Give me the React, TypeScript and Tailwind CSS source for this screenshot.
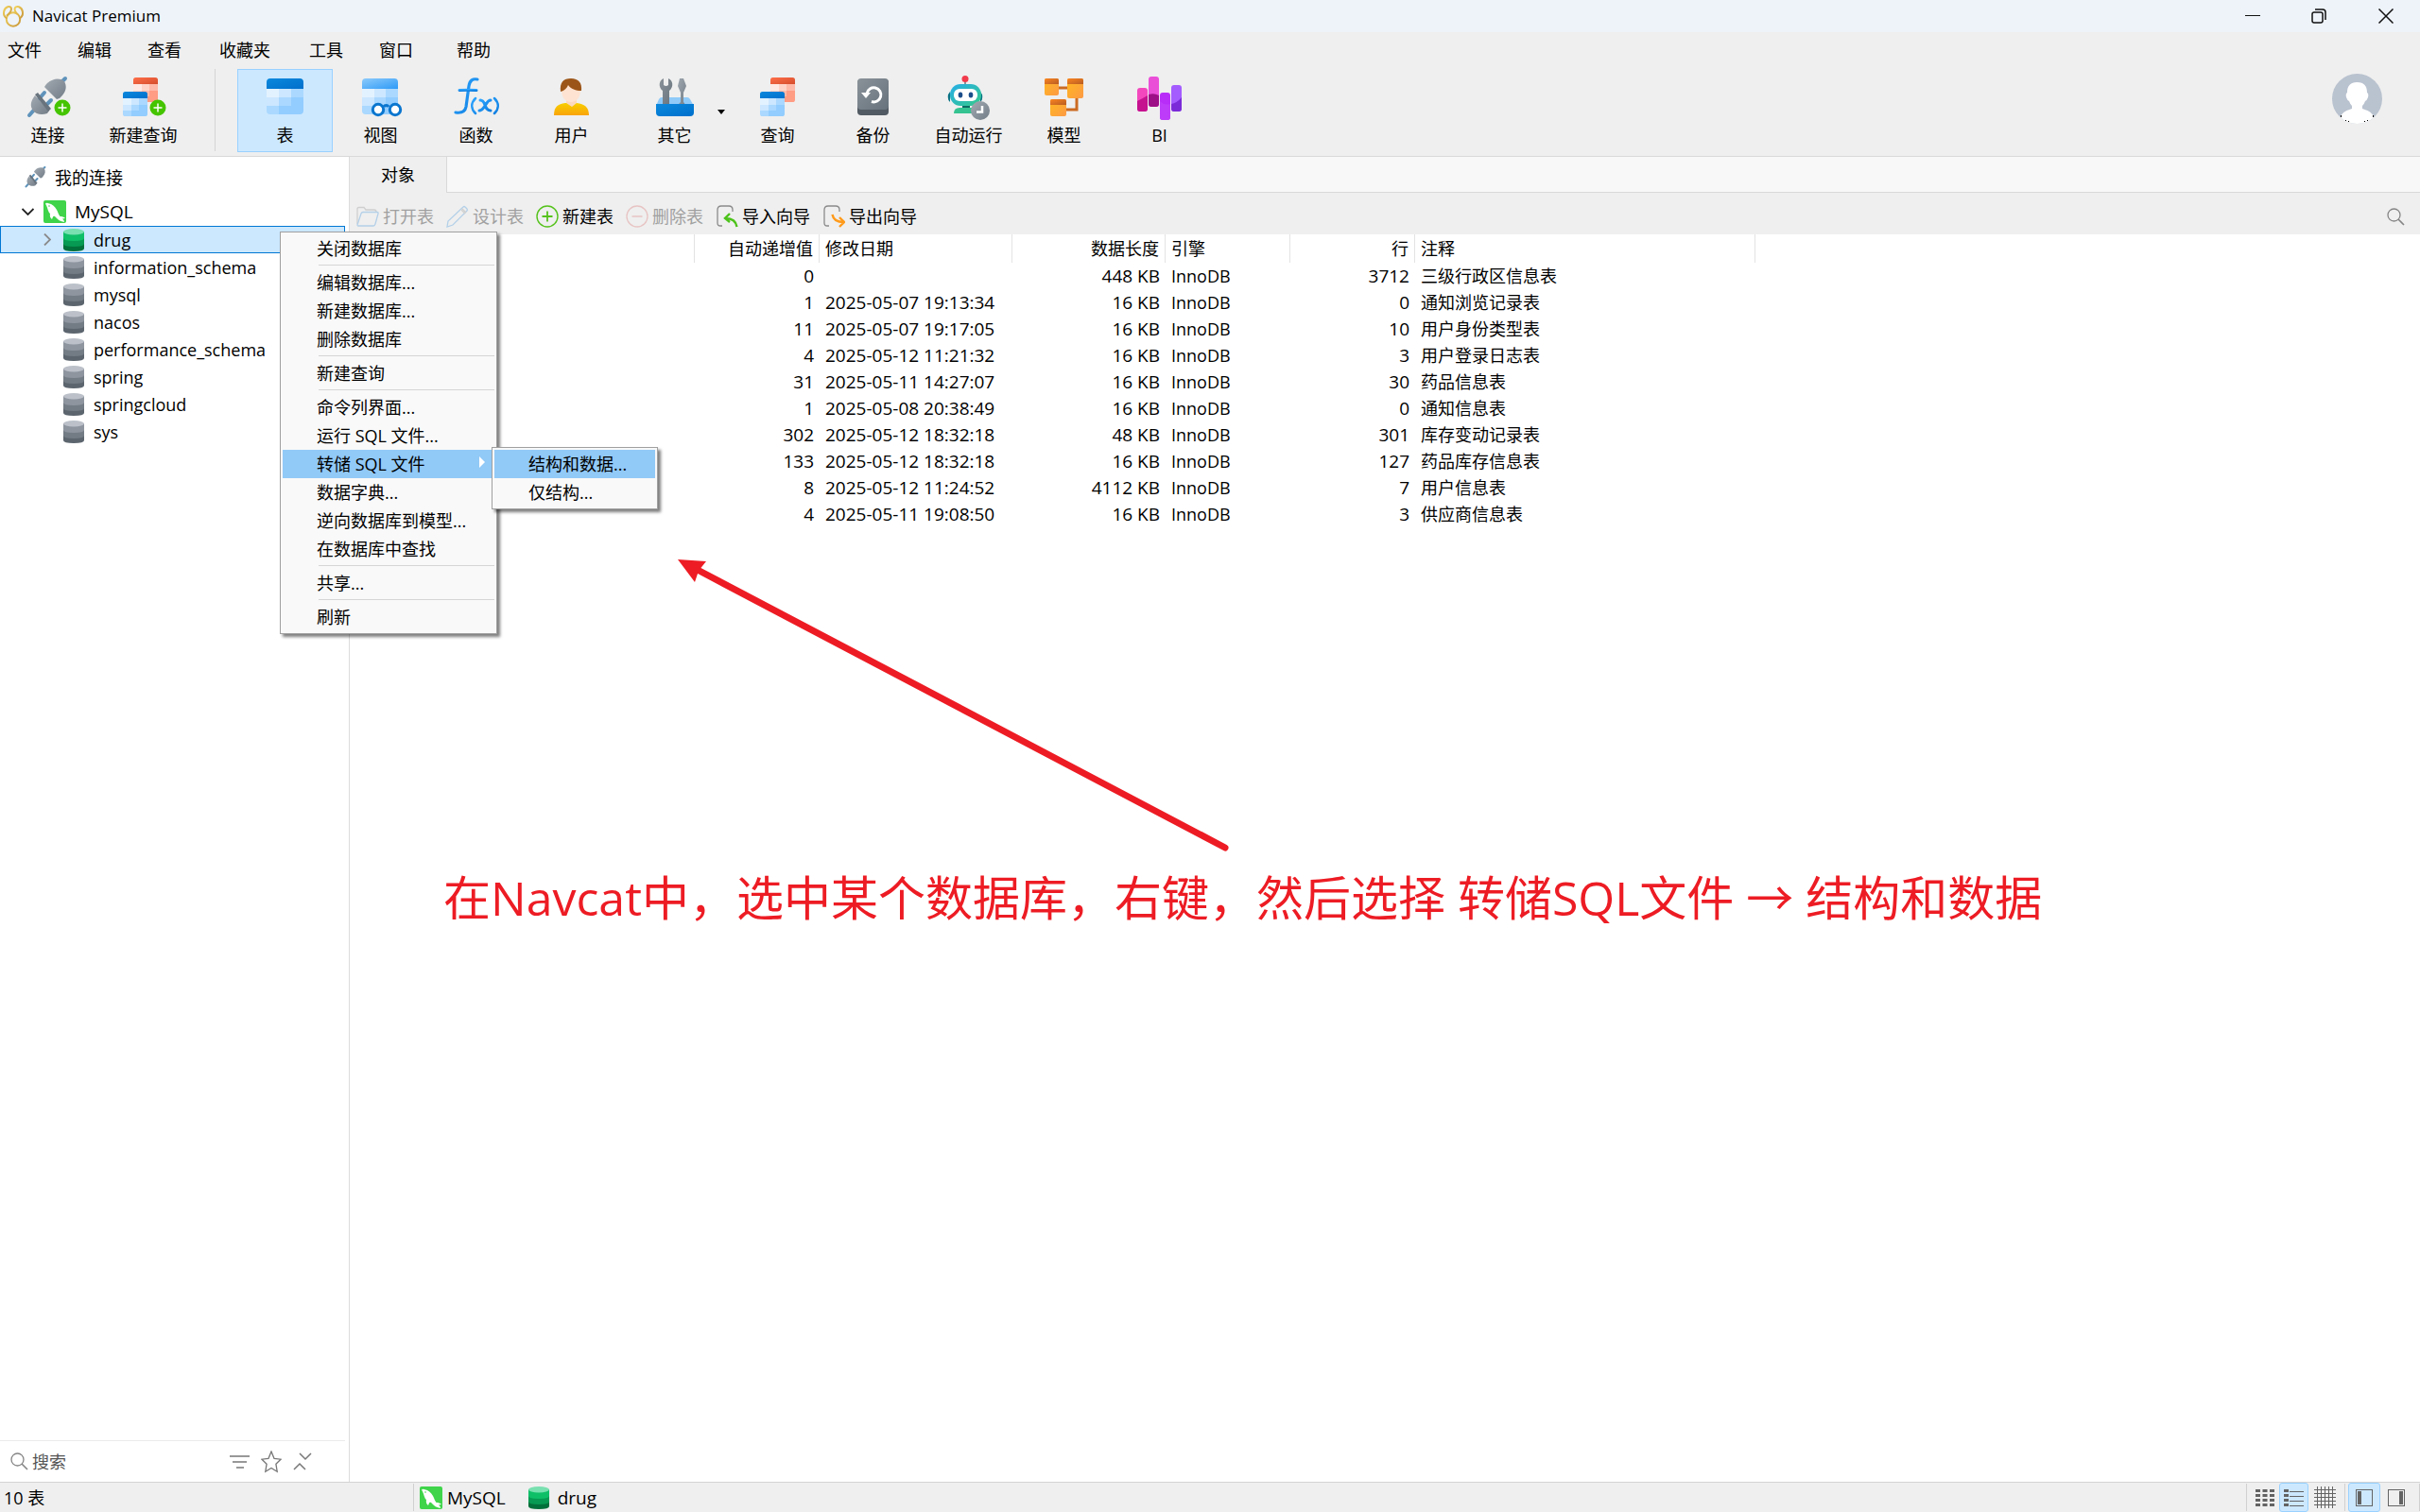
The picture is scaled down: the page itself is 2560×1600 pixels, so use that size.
import type { ReactNode } from 'react';

const DATABASES = [
  'information_schema',
  'mysql',
  'nacos',
  'performance_schema',
  'spring',
  'springcloud',
  'sys',
];

const ROWS = [
  ['0', '', '448 KB', 'InnoDB', '3712', '三级行政区信息表'],
  ['1', '2025-05-07 19:13:34', '16 KB', 'InnoDB', '0', '通知浏览记录表'],
  ['11', '2025-05-07 19:17:05', '16 KB', 'InnoDB', '10', '用户身份类型表'],
  ['4', '2025-05-12 11:21:32', '16 KB', 'InnoDB', '3', '用户登录日志表'],
  ['31', '2025-05-11 14:27:07', '16 KB', 'InnoDB', '30', '药品信息表'],
  ['1', '2025-05-08 20:38:49', '16 KB', 'InnoDB', '0', '通知信息表'],
  ['302', '2025-05-12 18:32:18', '48 KB', 'InnoDB', '301', '库存变动记录表'],
  ['133', '2025-05-12 18:32:18', '16 KB', 'InnoDB', '127', '药品库存信息表'],
  ['8', '2025-05-12 11:24:52', '4112 KB', 'InnoDB', '7', '用户信息表'],
  ['4', '2025-05-11 19:08:50', '16 KB', 'InnoDB', '3', '供应商信息表'],
];

const MENUS = [
  { label: '文件', width: 'w-[74px]' },
  { label: '编辑', width: 'w-[74px]' },
  { label: '查看', width: 'w-[76px]' },
  { label: '收藏夹', width: 'w-[95px]' },
  { label: '工具', width: 'w-[74px]' },
  { label: '窗口', width: 'w-[82px]' },
  { label: '帮助', width: 'w-[74px]' },
];

/* ---------- toolbar drawings ---------- */

function Gradients() {
  return (
    <svg className="absolute size-0" aria-hidden="true">
      <defs>
        <linearGradient id="gBlue" x1="0" y1="0" x2="1" y2="1">
          <stop offset="0" stopColor="#0b88dd" />
          <stop offset="1" stopColor="#0070cc" />
        </linearGradient>
        <linearGradient id="gSky" x1="0" y1="0" x2="1" y2="1">
          <stop offset="0" stopColor="#8ccafb" />
          <stop offset="1" stopColor="#2f9bf7" />
        </linearGradient>
        <linearGradient id="gRed" x1="0" y1="0" x2="1" y2="1">
          <stop offset="0" stopColor="#ff6e48" />
          <stop offset="1" stopColor="#d44d2d" />
        </linearGradient>
        <linearGradient id="gGray" x1="0" y1="0" x2="1" y2="1">
          <stop offset="0" stopColor="#a2a9b1" />
          <stop offset="1" stopColor="#727d87" />
        </linearGradient>
        <linearGradient id="gSlate" x1="0" y1="0" x2="1" y2="1">
          <stop offset="0" stopColor="#8a9299" />
          <stop offset="1" stopColor="#66727c" />
        </linearGradient>
        <linearGradient id="gBot" x1="0" y1="0" x2="1" y2="1">
          <stop offset="0" stopColor="#27aee8" />
          <stop offset="1" stopColor="#35c98a" />
        </linearGradient>
        <linearGradient id="gGold" x1="0" y1="0" x2="0" y2="1">
          <stop offset="0" stopColor="#f8cf00" />
          <stop offset="1" stopColor="#f9a30a" />
        </linearGradient>
        <linearGradient id="gAmber" x1="0" y1="0" x2="1" y2="1">
          <stop offset="0" stopColor="#ffb81f" />
          <stop offset="1" stopColor="#fd9a45" />
        </linearGradient>
        <linearGradient id="gRust" x1="0" y1="0" x2="1" y2="1">
          <stop offset="0" stopColor="#fb8521" />
          <stop offset="1" stopColor="#b85c22" />
        </linearGradient>
        <linearGradient id="gFx" x1="0" y1="0" x2="1" y2="1">
          <stop offset="0" stopColor="#2ea4ff" />
          <stop offset="1" stopColor="#0f7fe0" />
        </linearGradient>
        <linearGradient id="gNavicat" x1="0" y1="0" x2="1" y2="1">
          <stop offset="0" stopColor="#f2d35c" />
          <stop offset="1" stopColor="#c9973a" />
        </linearGradient>
      </defs>
    </svg>
  );
}

function GridCard({
  x,
  y,
  w,
  h,
  head,
  tones,
}: {
  x: number;
  y: number;
  w: number;
  h: number;
  head: string;
  tones: [string, string, string, string];
}) {
  const top = h * 0.28;
  const ch = (h - top) / 3;
  const cw = w / 3;
  const pattern = [
    [0, 1, 2],
    [1, 2, 3],
    [2, 3, 3],
  ];
  const id = `card${x}-${y}-${w}`;
  return (
    <g>
      <clipPath id={id}>
        <rect x={x} y={y} width={w} height={h} rx={w * 0.1} />
      </clipPath>
      <g clipPath={`url(#${id})`} shapeRendering="crispEdges">
        {pattern.map((row, r) =>
          row.map((tone, c) => (
            <rect
              key={`${r}${c}`}
              x={x + c * cw}
              y={y + top + r * ch}
              width={cw + 0.5}
              height={ch + 0.5}
              fill={tones[tone]}
            />
          )),
        )}
        <rect x={x} y={y} width={w} height={top} fill={head} />
      </g>
    </g>
  );
}

const BLUES: [string, string, string, string] = ['#e3f2ff', '#cce7ff', '#aad8ff', '#93cdff'];
const REDS: [string, string, string, string] = ['#ffe9e4', '#ffd3c8', '#ffb9a8', '#ff9c84'];

function Plug() {
  return (
    <g>
      <path d="M37 6 41 2M3 41l7-8" stroke="#5f93bb" strokeWidth="4" strokeLinecap="round" />
      <path d="M19 17l-6 7M26 25l-6 6" stroke="#5f93bb" strokeWidth="4" strokeLinecap="round" />
      <path d="M19 11 32 24q3 0 5-3c5-5 6-11 3-16C35 1 28 2 22 7q-2 2-3 4Z" fill="url(#gGray)" />
      <path d="M9 20 24 36l-2 3c-6 2-12 1-15-3-4-5-2-11 2-16Z" fill="url(#gGray)" />
      <path d="m9 19 3-2 14 17-3 3Z" fill="#68737d" />
    </g>
  );
}

function PlusBadge({ cx, cy }: { cx: number; cy: number }) {
  return (
    <g>
      <circle cx={cx} cy={cy} r="8.5" fill="#45c400" />
      <path d={`M${cx - 4.5} ${cy}h9M${cx} ${cy - 4.5}v9`} stroke="#fff" strokeWidth="1.5" />
    </g>
  );
}

function Drawing({ children }: { children: ReactNode }) {
  return (
    <svg width="48" height="48" viewBox="0 0 48 48" fill="none" aria-hidden="true">
      {children}
    </svg>
  );
}

const ConnectIcon = () => (
  <Drawing>
    <g transform="translate(1 2)">
      <Plug />
    </g>
    <PlusBadge cx={39} cy={35} />
  </Drawing>
);

const QueryCards = () => (
  <g>
    <GridCard x={13} y={3} w={26} h={26} head="url(#gRed)" tones={REDS} />
    <GridCard x={2} y={18} w={26} h={26} head="url(#gBlue)" tones={BLUES} />
  </g>
);

const NewQueryIcon = () => (
  <Drawing>
    <QueryCards />
    <PlusBadge cx={39} cy={35} />
  </Drawing>
);

const TableIcon = () => (
  <Drawing>
    <GridCard x={4} y={4} w={39} h={38} head="url(#gBlue)" tones={BLUES} />
  </Drawing>
);

const ViewIcon = () => (
  <Drawing>
    <GridCard x={4} y={4} w={38} h={38} head="url(#gSky)" tones={BLUES} />
    <g stroke="#0a76cf" strokeWidth="3" fill="#fff">
      <path d="M27 34c1-2 4-2 5 0" fill="none" />
      <circle cx="21" cy="37" r="5.7" />
      <circle cx="39" cy="37" r="5.7" />
    </g>
  </Drawing>
);

const FunctionIcon = () => (
  <Drawing>
    <g stroke="url(#gFx)" strokeLinecap="round">
      <path d="M25 5c-5-1-8 1-9 7l-3 22c-1 5-4 7-11 6" strokeWidth="3.2" />
      <path d="M6 16.500c6-.5 12-.5 18 .1" strokeWidth="3" />
      <path d="M23 25c-5 5-5 11 0 16M43 25c5 5 5 11 0 16" strokeWidth="2.500" />
      <path d="M28 27c3 0 4 2 5 5s2 6 6 6M39 27c-3 0-4 3-6 6s-3 5-6 5" strokeWidth="3" />
    </g>
  </Drawing>
);

const UserIcon = () => (
  <Drawing>
    <path d="M5 43c0-9 4-12 12-13h12c8 1 13 4 13 13Z" fill="url(#gGold)" />
    <path d="M18 25h11v5l-5 4-6-4Z" fill="#fbd9bf" />
    <path d="M13 16c0 8 4 13 10 13s10-5 10-13l-3-6-14-1Z" fill="#ffe3d2" />
    <path d="M12 18C11 8 15 4 23 4s12 5 11 13c-6 0-11-2-14-6-1 3-4 6-8 7Z" fill="#9c5518" />
  </Drawing>
);

const OtherIcon = () => (
  <Drawing>
    <path d="M7 26q1-2 3-2h27q2 0 3 2l4 7H4Z" fill="#8fcaf9" />
    <path
      d="M12 4c-5 2-6 9-1 13v17h7V17c5-4 4-11-1-13v7q-2.500 2-5 0Z"
      fill="url(#gSlate)"
    />
    <path d="M29 4h4l3 8-3 7v10l3 4H26l4-4V19l-3-7Z" fill="url(#gGray)" />
    <path d="M4 31h40v9q0 4-4 4H8q-4 0-4-4Z" fill="url(#gBlue)" />
  </Drawing>
);

const QueryIcon = () => (
  <Drawing>
    <g transform="translate(3 0)">
      <QueryCards />
    </g>
  </Drawing>
);

const BackupIcon = () => (
  <Drawing>
    <rect x="7" y="5" width="33" height="38" rx="4" fill="#525b63" />
    <rect x="7" y="4" width="33" height="33" rx="4" fill="url(#gSlate)" />
    <path d="M17 20a7.500 7.500 0 1 1 5 8.500" stroke="#fff" strokeWidth="3" />
    <path d="M11 19h10l-5 6Z" fill="#fff" />
  </Drawing>
);

const AutomationIcon = () => (
  <Drawing>
    <path d="M20 5v6" stroke="#8a9299" strokeWidth="2" />
    <circle cx="20" cy="4.500" r="3.500" fill="#f13a4b" />
    <path d="M2 21q-1 6 2 8V18ZM38 21q1 6-2 8V18Z" fill="#0a7284" />
    <rect x="4" y="10" width="33" height="23" rx="11" fill="url(#gBot)" />
    <rect x="8" y="15" width="25" height="13" rx="6" fill="#fff" />
    <ellipse cx="15" cy="21.500" rx="2.300" ry="3" fill="#1c4e8a" />
    <ellipse cx="26" cy="21.500" rx="2.300" ry="3" fill="#1c4e8a" />
    <path d="M17 33h8v3h-8Z" fill="#0b6b62" />
    <path d="M8 41q0-6 6-6h16v6Z" fill="#35c391" />
    <circle cx="36" cy="38" r="10" fill="url(#gGray)" />
    <path d="M38 33v6.500h-6" stroke="#fff" strokeWidth="2.500" />
  </Drawing>
);

const ModelIcon = () => (
  <Drawing>
    <path d="M16 14h14M37 22v15H22" stroke="#cc6b22" strokeWidth="3" />
    <rect x="3" y="4" width="15" height="18" rx="2" fill="url(#gAmber)" />
    <path d="M3 10V6q0-2 2-2h11q2 0 2 2v4Z" fill="url(#gRust)" />
    <rect x="27" y="4" width="17" height="21" rx="2" fill="url(#gAmber)" />
    <path d="M27 10V6q0-2 2-2h13q2 0 2 2v4Z" fill="url(#gRust)" />
    <rect x="9" y="26" width="17" height="18" rx="2" fill="url(#gAmber)" />
    <path d="M9 32v-4q0-2 2-2h13q2 0 2 2v4Z" fill="url(#gRust)" />
  </Drawing>
);

const BiIcon = () => (
  <Drawing>
    <rect x="0" y="14" width="11" height="25" rx="3" fill="#f348bd" />
    <path d="M0 28q6-3 11-6v14q0 3-3 3H3q-3 0-3-3Z" fill="#c5128f" />
    <rect x="12" y="2" width="11" height="32" rx="3" fill="#ea4fd8" />
    <path d="M12 21q6-2 11 1v9q0 3-3 3h-5q-3 0-3-3Z" fill="#9d0f86" />
    <rect x="24" y="19" width="11" height="29" rx="3" fill="#b82ef8" />
    <path d="M24 28q5 5 11 3v14q0 3-3 3h-5q-3 0-3-3Z" fill="#bd3cf9" />
    <rect x="36" y="11" width="11" height="28" rx="3" fill="#a45cff" />
    <path d="M36 31q6-1 11-7v12q0 3-3 3h-5q-3 0-3-3Z" fill="#7b2bd8" />
  </Drawing>
);

/* ---------- small icons ---------- */

function NavicatLogo() {
  return (
    <svg width="24" height="24" viewBox="0 0 24 24" fill="none" aria-hidden="true">
      <g stroke="url(#gNavicat)" strokeWidth="2" strokeLinecap="round">
        <circle cx="12" cy="15.500" r="7.200" />
        <path d="M4.500 14C.5 11 1.500 4 6 2.200c2.500-.8 4 .6 4 2.500 0 3-1.500 3.800-4.500 6.500" />
        <path d="M19.500 14c4-3 3-10-1.500-11.800-2.500-.8-4.500.6-4.500 2.500 0 2 .8 3 2 4.500" />
      </g>
    </svg>
  );
}

function DatabaseIcon({ active = false }: { active?: boolean }) {
  const c = active
    ? ['#79e0b0', '#0fbf68', '#069a52', '#02703a']
    : ['#bcc1c9', '#8f959f', '#737b84', '#5c656e'];
  return (
    <svg width="22" height="24" viewBox="0 0 22 24" className="shrink-0" aria-hidden="true">
      <path d="M0 15h22v6q0 3-11 3T0 21Z" fill={c[3]} />
      <path d="M0 9h22v7q0 3-11 3T0 16Z" fill={c[2]} />
      <path d="M0 3h22v7q0 3-11 3T0 10Z" fill={c[1]} />
      <ellipse cx="11" cy="3.200" rx="11" ry="3.200" fill={c[0]} />
    </svg>
  );
}

function MySqlIcon() {
  return (
    <svg width="24" height="24" viewBox="0 0 24 24" className="shrink-0" aria-hidden="true">
      <rect width="24" height="24" rx="2" fill="#3fd44a" />
      <path
        d="M2 3.500Q3.500 2 5.500 3.200C9 4 12 6 14 10c1.500 3 2 5 3.500 7 2 0 4 .5 5.500 2l-3 .5c1 1 2 2 2 3.500-4-.5-7-2.500-10-6-1-.5-1.800-.3-2 .5L9 20c-2-1.500-2.500-3.500-2-6C4.500 12 5 8.500 2 3.500Z"
        fill="#fff"
      />
      <circle cx="6" cy="6" r=".8" fill="#3fd44a" />
    </svg>
  );
}

function SearchIcon({ size }: { size: number }) {
  return (
    <svg width={size} height={size} viewBox="0 0 19 19" fill="none" stroke="#858585" aria-hidden="true">
      <circle cx="7.500" cy="7.500" r="6.500" strokeWidth="1.300" />
      <path d="m12 12 6 6" strokeWidth="1.600" />
    </svg>
  );
}

const FolderIcon = () => (
  <svg width="24" height="24" viewBox="0 0 24 24" fill="none" strokeWidth="1.300" aria-hidden="true">
    <path d="M1 20V4q0-1.500 1.500-1.500H8l2 2.500h9q2 0 2 2.500" stroke="#cfcfcf" />
    <path d="m1 21 4-12q.5-1.500 2-1.500h15q1.500 0 1 1.500l-3 11q-.5 2-2 2H2q-1 0-1-1Z" stroke="#b4d0e8" />
  </svg>
);

const PencilIcon = () => (
  <svg width="24" height="24" viewBox="0 0 24 24" fill="none" strokeWidth="1.300" aria-hidden="true">
    <path d="m2 17-1 6 6-2L22 6q1-1 0-2l-2-2q-1-1-2 0Z" stroke="#b4d0e8" />
    <path d="m16 5 4 4" stroke="#cfcfcf" />
    <path d="m17 4 4 4" stroke="#cfcfcf" />
  </svg>
);

const AddIcon = () => (
  <svg width="24" height="24" viewBox="0 0 24 24" fill="none" stroke="#55c21c" aria-hidden="true">
    <circle cx="12" cy="12" r="11" strokeWidth="1.400" />
    <path d="M6.500 12h11M12 6.500v11" strokeWidth="1.800" />
  </svg>
);

const RemoveIcon = () => (
  <svg width="24" height="24" viewBox="0 0 24 24" fill="none" stroke="#e8c4c4" aria-hidden="true">
    <circle cx="12" cy="12" r="11" strokeWidth="1.300" />
    <path d="M6.500 12h11" strokeWidth="1.500" />
  </svg>
);

const ImportIcon = () => (
  <svg width="24" height="24" viewBox="0 0 24 24" fill="none" aria-hidden="true">
    <path d="M7 22H5q-3 0-3-3V5q0-4 4-4h8q4 0 4 4v2" stroke="#8a8a8a" strokeWidth="1.300" />
    <path d="M15 9 10 14l5 4M10.500 14c7 0 11 3 12 9" stroke="#4cc21a" strokeWidth="2.400" />
  </svg>
);

const ExportIcon = () => (
  <svg width="24" height="24" viewBox="0 0 24 24" fill="none" aria-hidden="true">
    <path d="M7 22H5q-3 0-3-3V5q0-4 4-4h8q4 0 4 4v2" stroke="#8a8a8a" strokeWidth="1.300" />
    <path d="m18 13 5 5-5 5M22.500 18c-7 0-11-2-12-8" stroke="#ff9a1a" strokeWidth="2.400" />
  </svg>
);

/* ---------- shared parts ---------- */

function ToolButton({
  icon,
  label,
  active = false,
  wide = false,
}: {
  icon: ReactNode;
  label: string;
  active?: boolean;
  wide?: boolean;
}) {
  return (
    <button
      type="button"
      aria-pressed={active}
      className={`relative flex h-[88px] shrink-0 flex-col items-center border pt-[5px] ${
        wide ? 'w-[117px]' : 'w-[101px]'
      } ${active ? 'border-[#99d1ff] bg-[#cce8ff]' : 'border-transparent'}`}
    >
      {icon}
      <span className="mt-[2px] leading-[28px]">{label}</span>
      {wide && (
        <svg
          width="8"
          height="5"
          viewBox="0 0 8 5"
          className="absolute top-[42px] right-1"
          aria-hidden="true"
        >
          <path d="M0 0h8L4 5Z" fill="#000" />
        </svg>
      )}
    </button>
  );
}

function ObjectAction({
  icon,
  label,
  disabled = false,
}: {
  icon: ReactNode;
  label: string;
  disabled?: boolean;
}) {
  return (
    <button type="button" disabled={disabled} className="flex items-center gap-1 disabled:text-[#a0a0a0]">
      {icon}
      {label}
    </button>
  );
}

function MenuItem({
  label,
  active = false,
  children,
}: {
  label: string;
  active?: boolean;
  children?: ReactNode;
}) {
  return (
    <li role="none" className="relative">
      <button
        type="button"
        role="menuitem"
        className={`flex h-[30px] w-full items-center justify-between pr-[9px] pl-9 text-left whitespace-nowrap ${
          active ? 'bg-[#91c9f7]' : ''
        }`}
      >
        {label}
        {children && (
          <svg width="6" height="12" viewBox="0 0 6 12" className="mr-px mb-1" aria-hidden="true">
            <path d="M0 0v12l6-6Z" fill="#fff" />
          </svg>
        )}
      </button>
      {children}
    </li>
  );
}

const MenuDivider = () => (
  <li role="separator" className="flex h-[6px] items-start pt-[2px] pl-[38px]">
    <span className="h-px w-full bg-[#d5d5d5]" />
  </li>
);

const MENU_BOX =
  'absolute z-20 border border-[#a0a0a0] bg-[#f9f9f9] p-[2px] shadow-[3px_3px_3px_rgba(0,0,0,0.5)]';

function ContextMenu() {
  return (
    <ul role="menu" aria-label="数据库" className={`${MENU_BOX} top-[5px] left-[295px] w-[230px]`}>
      <MenuItem label="关闭数据库" />
      <MenuDivider />
      <MenuItem label="编辑数据库..." />
      <MenuItem label="新建数据库..." />
      <MenuItem label="删除数据库" />
      <MenuDivider />
      <MenuItem label="新建查询" />
      <MenuDivider />
      <MenuItem label="命令列界面..." />
      <MenuItem label="运行 SQL 文件..." />
      <MenuItem label="转储 SQL 文件" active>
        <ul role="menu" aria-label="转储 SQL 文件" className={`${MENU_BOX} -top-[3px] left-[221px] w-[176px]`}>
          <MenuItem label="结构和数据..." active />
          <MenuItem label="仅结构..." />
        </ul>
      </MenuItem>
      <MenuItem label="数据字典..." />
      <MenuItem label="逆向数据库到模型..." />
      <MenuItem label="在数据库中查找" />
      <MenuDivider />
      <MenuItem label="共享..." />
      <MenuDivider />
      <MenuItem label="刷新" />
    </ul>
  );
}

/* ---------- page sections ---------- */

function TitleBar() {
  return (
    <header className="flex h-[34px] shrink-0 items-center bg-[#eef3fa] pl-[2px]">
      <NavicatLogo />
      <h1 className="ml-2 flex-1 text-[17px]">Navicat Premium</h1>
      <div className="flex h-full">
        <button type="button" aria-label="最小化" className="flex w-[70px] items-center justify-center">
          <svg width="16" height="16" viewBox="0 0 16 16" stroke="#111" aria-hidden="true">
            <path d="M0 7.500h16" />
          </svg>
        </button>
        <button type="button" aria-label="还原" className="flex w-[70px] items-center justify-center">
          <svg width="16" height="16" viewBox="0 0 16 16" fill="none" stroke="#111" strokeWidth="1.500" aria-hidden="true">
            <rect x="1" y="4" width="11" height="11" rx="2" />
            <path d="M4 1h8q3 0 3 3v8" />
          </svg>
        </button>
        <button type="button" aria-label="关闭" className="flex w-[72px] items-center justify-center">
          <svg width="16" height="16" viewBox="0 0 16 16" stroke="#111" strokeWidth="1.500" aria-hidden="true">
            <path d="m.5.5 15 15m0-15-15 15" />
          </svg>
        </button>
      </div>
    </header>
  );
}

function Toolbar() {
  return (
    <div className="flex h-[94px] shrink-0 items-start border-b border-[#d9d9d9] pt-px">
      <ToolButton icon={<ConnectIcon />} label="连接" />
      <ToolButton icon={<NewQueryIcon />} label="新建查询" />
      <span className="mr-[23px] ml-[25px] h-[87px] w-px bg-[#d4d4d4]" />
      <ToolButton icon={<TableIcon />} label="表" active />
      <ToolButton icon={<ViewIcon />} label="视图" />
      <ToolButton icon={<FunctionIcon />} label="函数" />
      <ToolButton icon={<UserIcon />} label="用户" />
      <ToolButton icon={<OtherIcon />} label="其它" wide />
      <ToolButton icon={<QueryIcon />} label="查询" />
      <ToolButton icon={<BackupIcon />} label="备份" />
      <ToolButton icon={<AutomationIcon />} label="自动运行" />
      <ToolButton icon={<ModelIcon />} label="模型" />
      <ToolButton icon={<BiIcon />} label="BI" />
      <button type="button" aria-label="用户帐户" className="mt-[5px] mr-10 ml-auto">
        <svg width="53" height="53" viewBox="0 0 53 53" aria-hidden="true">
          <clipPath id="avatar">
            <circle cx="26.500" cy="26.500" r="26.500" />
          </clipPath>
          <g clipPath="url(#avatar)">
            <rect width="53" height="53" fill="#b9c2cf" />
            <path
              d="M26.500 9C19 9 16 13 16 20q-2 1-1 5 1 3 3 4 1 3 3 5v3C15 39 12 40 9 45v8h35v-8c-3-5-6-6-12-8v-3q2-2 3-5 2-1 3-4 1-4-1-5c0-7-3-11-10.500-11Z"
              fill="#fff"
            />
            <path
              d="M9 44h1v2H9ZM43 44h1v2h-1ZM14 49h1v1h-1ZM17 50h1v1h-1ZM34 50h1v1h-1ZM37 49h1v1h-1Z"
              fill="#000"
            />
          </g>
        </svg>
      </button>
    </div>
  );
}

function Sidebar() {
  return (
    <aside className="flex w-[370px] shrink-0 flex-col border-r border-[#dcdcdc] bg-white">
      <ul role="tree" aria-label="我的连接" className="flex-1 pt-[7px]">
        <li role="treeitem" className="mb-[7px] flex h-[29px] items-center gap-2 pl-[26px]">
          <svg width="24" height="24" viewBox="0 0 46 46" fill="none" aria-hidden="true">
            <Plug />
          </svg>
          我的连接
        </li>
        <li role="treeitem" aria-expanded="true" className="mb-px flex h-[29px] items-center pl-[23px]">
          <svg width="13" height="8" viewBox="0 0 13 8" fill="none" stroke="#222" strokeWidth="1.800" aria-hidden="true">
            <path d="m.5 1 6 6 6-6" />
          </svg>
          <span className="ml-[10px] flex items-center gap-[9px] text-[19px]">
            <MySqlIcon />
            MySQL
          </span>
        </li>
        <li
          role="treeitem"
          aria-selected="true"
          className="relative mr-1 flex h-[29px] items-center border border-[#0078d4] bg-[#cce8ff] pl-[45px]"
        >
          <svg width="8" height="13" viewBox="0 0 8 13" fill="none" stroke="#8a8a8a" strokeWidth="1.800" aria-hidden="true">
            <path d="m1 .5 6 6-6 6" />
          </svg>
          <span className="ml-[13px] flex items-center gap-[10px]">
            <DatabaseIcon active />
            drug
          </span>
          <ContextMenu />
        </li>
        {DATABASES.map((name) => (
          <li key={name} role="treeitem" className="flex h-[29px] items-center gap-[10px] pl-[67px]">
            <DatabaseIcon />
            {name}
          </li>
        ))}
      </ul>
      <div className="mr-1 flex h-[44px] items-center border-t border-[#ebebeb] pl-[11px]">
        <label htmlFor="tree-search" aria-label="搜索">
          <SearchIcon size={19} />
        </label>
        <input
          id="tree-search"
          type="text"
          placeholder="搜索"
          className="ml-1 w-0 flex-1 bg-transparent outline-none placeholder:text-[#555]"
        />
        <div className="mr-[35px] flex items-center gap-3">
          <button type="button" aria-label="筛选">
            <svg width="21" height="14" viewBox="0 0 21 14" stroke="#777" strokeWidth="1.300" aria-hidden="true">
              <path d="M0 1h21M3 7h15M7 13h8" />
            </svg>
          </button>
          <button type="button" aria-label="收藏">
            <svg width="22" height="24" viewBox="0 0 22 24" fill="none" stroke="#777" strokeWidth="1.300" aria-hidden="true">
              <path d="m11 1 3 7.300 7 .9-5.100 5 1.300 8L11 18.500l-6.200 3.700 1.300-8L1 9.200l7-.9Z" />
            </svg>
          </button>
          <button type="button" aria-label="全部折叠">
            <svg width="20" height="19" viewBox="0 0 20 19" fill="none" stroke="#777" strokeWidth="1.500" aria-hidden="true">
              <path d="m7 1 6 6 6-6M1 18l6-6 6 6" />
            </svg>
          </button>
        </div>
      </div>
    </aside>
  );
}

const HEAD = 'h-[30px] border-r border-[#e3e3e3] px-[6px] font-normal';

function ObjectTable() {
  return (
    <table className="w-max table-fixed border-separate border-spacing-0">
      <colgroup>
        <col className="w-[365px]" />
        <col className="w-[132px]" />
        <col className="w-[204px]" />
        <col className="w-[162px]" />
        <col className="w-[132px]" />
        <col className="w-[132px]" />
        <col className="w-[360px]" />
      </colgroup>
      <thead>
        <tr>
          <td className={HEAD} />
          <th scope="col" className={`${HEAD} text-right`}>自动递增值</th>
          <th scope="col" className={`${HEAD} text-left`}>修改日期</th>
          <th scope="col" className={`${HEAD} text-right`}>数据长度</th>
          <th scope="col" className={`${HEAD} text-left`}>引擎</th>
          <th scope="col" className={`${HEAD} text-right`}>行</th>
          <th scope="col" className={`${HEAD} text-left`}>注释</th>
        </tr>
      </thead>
      <tbody>
        {ROWS.map(([auto, modified, size, engine, count, comment]) => (
          <tr key={comment} className="h-7 text-[19px]">
            <td />
            <td className="px-[6px] text-right">{auto}</td>
            <td className="px-[6px]">{modified}</td>
            <td className="px-[6px] text-right">{size}</td>
            <td className="px-[6px] text-[18px]">{engine}</td>
            <td className="px-[6px] text-right">{count}</td>
            <td className="px-[6px] text-[18px]">{comment}</td>
          </tr>
        ))}
      </tbody>
    </table>
  );
}

function Annotation() {
  return (
    <>
      <svg
        width="590"
        height="315"
        viewBox="0 0 590 315"
        className="absolute top-[343px] left-[346px]"
        aria-hidden="true"
      >
        <path d="M20 11 580 306" stroke="#ed1c24" strokeWidth="7" strokeLinecap="round" />
        <path d="m1 1 30 2-8 10-4 12Z" fill="#ed1c24" />
      </svg>
      <p className="absolute top-[667px] left-[99px] text-[50px] leading-[70px] whitespace-nowrap text-[#ed1c24]">
        在Navcat中，选中某个数据库，右键，然后选择 转储SQL文件 → 结构和数据
      </p>
    </>
  );
}

function Workspace() {
  return (
    <main className="flex min-w-0 flex-1 flex-col">
      <div role="tablist" className="flex h-[38px] shrink-0">
        <button type="button" role="tab" aria-selected="true" className="w-[103px] border-r border-[#d9d9d9]">
          对象
        </button>
        <span className="flex-1 border-b border-[#d9d9d9] bg-[#f8f8f8]" />
      </div>
      <div className="flex h-11 shrink-0 items-center gap-[13px] pt-[6px] pr-4 pl-[7px]">
        <ObjectAction icon={<FolderIcon />} label="打开表" disabled />
        <ObjectAction icon={<PencilIcon />} label="设计表" disabled />
        <ObjectAction icon={<AddIcon />} label="新建表" />
        <ObjectAction icon={<RemoveIcon />} label="删除表" disabled />
        <ObjectAction icon={<ImportIcon />} label="导入向导" />
        <ObjectAction icon={<ExportIcon />} label="导出向导" />
        <button type="button" aria-label="搜索" className="ml-auto">
          <SearchIcon size={19} />
        </button>
      </div>
      <section className="relative flex-1 bg-white">
        <ObjectTable />
        <Annotation />
      </section>
    </main>
  );
}

function StatusButton({
  label,
  active = false,
  wide = false,
  children,
}: {
  label: string;
  active?: boolean;
  wide?: boolean;
  children: ReactNode;
}) {
  return (
    <button
      type="button"
      aria-label={label}
      aria-pressed={active}
      className={`flex h-[31px] items-center justify-center rounded-[3px] border ${
        wide ? 'w-[34px]' : 'w-[31px]'
      } ${active ? 'border-[#99d1ff] bg-[#cce8ff]' : 'border-transparent'}`}
    >
      {children}
    </button>
  );
}

const Rule = () => <span className="h-[29px] w-px bg-[#d0d0d0]" />;

function StatusBar() {
  const rows = [0, 5, 10, 15];
  return (
    <footer className="flex h-8 shrink-0 items-center border-t border-[#d4d4d4]">
      <span className="w-[437px] pl-1">10 表</span>
      <Rule />
      <span className="ml-[6px] flex items-center gap-[5px] text-[19px]">
        <MySqlIcon />
        MySQL
      </span>
      <span className="ml-6 flex items-center gap-[9px] text-[19px]">
        <DatabaseIcon active />
        drug
      </span>
      <div className="ml-auto flex items-center">
        <Rule />
        <div className="flex pr-1 pl-[3px]">
          <StatusButton label="列表">
            <svg width="20" height="18" viewBox="0 0 20 18" fill="#636363" aria-hidden="true">
              {rows.map((y) => (
                <path key={y} d={`M0 ${y}h5v3H0ZM7.500 ${y}h5v3h-5ZM15 ${y}h5v3h-5Z`} />
              ))}
            </svg>
          </StatusButton>
          <StatusButton label="详细信息" active>
            <svg width="21" height="18" viewBox="0 0 21 18" fill="#636363" aria-hidden="true">
              {rows.map((y) => (
                <path key={y} d={`M0 ${y}h5v3H0ZM6 ${y + 2}h15v1H6Z`} />
              ))}
            </svg>
          </StatusButton>
          <StatusButton label="ER 图表" wide>
            <svg width="23" height="23" viewBox="0 0 23 23" stroke="#636363" aria-hidden="true">
              <path d="M0 3.500h23M0 7.500h23M0 11.500h23M0 15.500h23M0 19.500h23M3.500 0v23M7.500 0v23M11.500 0v23M15.500 0v23M19.500 0v23" />
            </svg>
          </StatusButton>
        </div>
        <Rule />
        <div className="flex pr-[7px] pl-[3px]">
          <StatusButton label="左侧窗格" active wide>
            <svg width="18" height="18" viewBox="0 0 18 18" fill="none" aria-hidden="true">
              <rect x=".5" y=".5" width="17" height="17" stroke="#636363" />
              <path d="M2 2h4v14H2Z" fill="#636363" />
            </svg>
          </StatusButton>
          <StatusButton label="右侧窗格" wide>
            <svg width="18" height="18" viewBox="0 0 18 18" fill="none" aria-hidden="true">
              <rect x=".5" y=".5" width="17" height="17" stroke="#636363" />
              <path d="M12 2h4v14h-4Z" fill="#636363" />
            </svg>
          </StatusButton>
        </div>
        <Rule />
      </div>
    </footer>
  );
}

export default function App() {
  return (
    <div className="flex h-screen flex-col overflow-hidden bg-[#efefef] font-['Open_Sans','Noto_Sans_CJK_SC',sans-serif] text-[18px] leading-[24px] text-black">
      <Gradients />
      <TitleBar />
      <nav className="flex h-[38px] shrink-0 items-center pl-2">
        {MENUS.map(({ label, width }) => (
          <button key={label} type="button" className={`${width} text-left`}>
            {label}
          </button>
        ))}
      </nav>
      <Toolbar />
      <div className="flex min-h-0 flex-1">
        <Sidebar />
        <Workspace />
      </div>
      <StatusBar />
    </div>
  );
}
